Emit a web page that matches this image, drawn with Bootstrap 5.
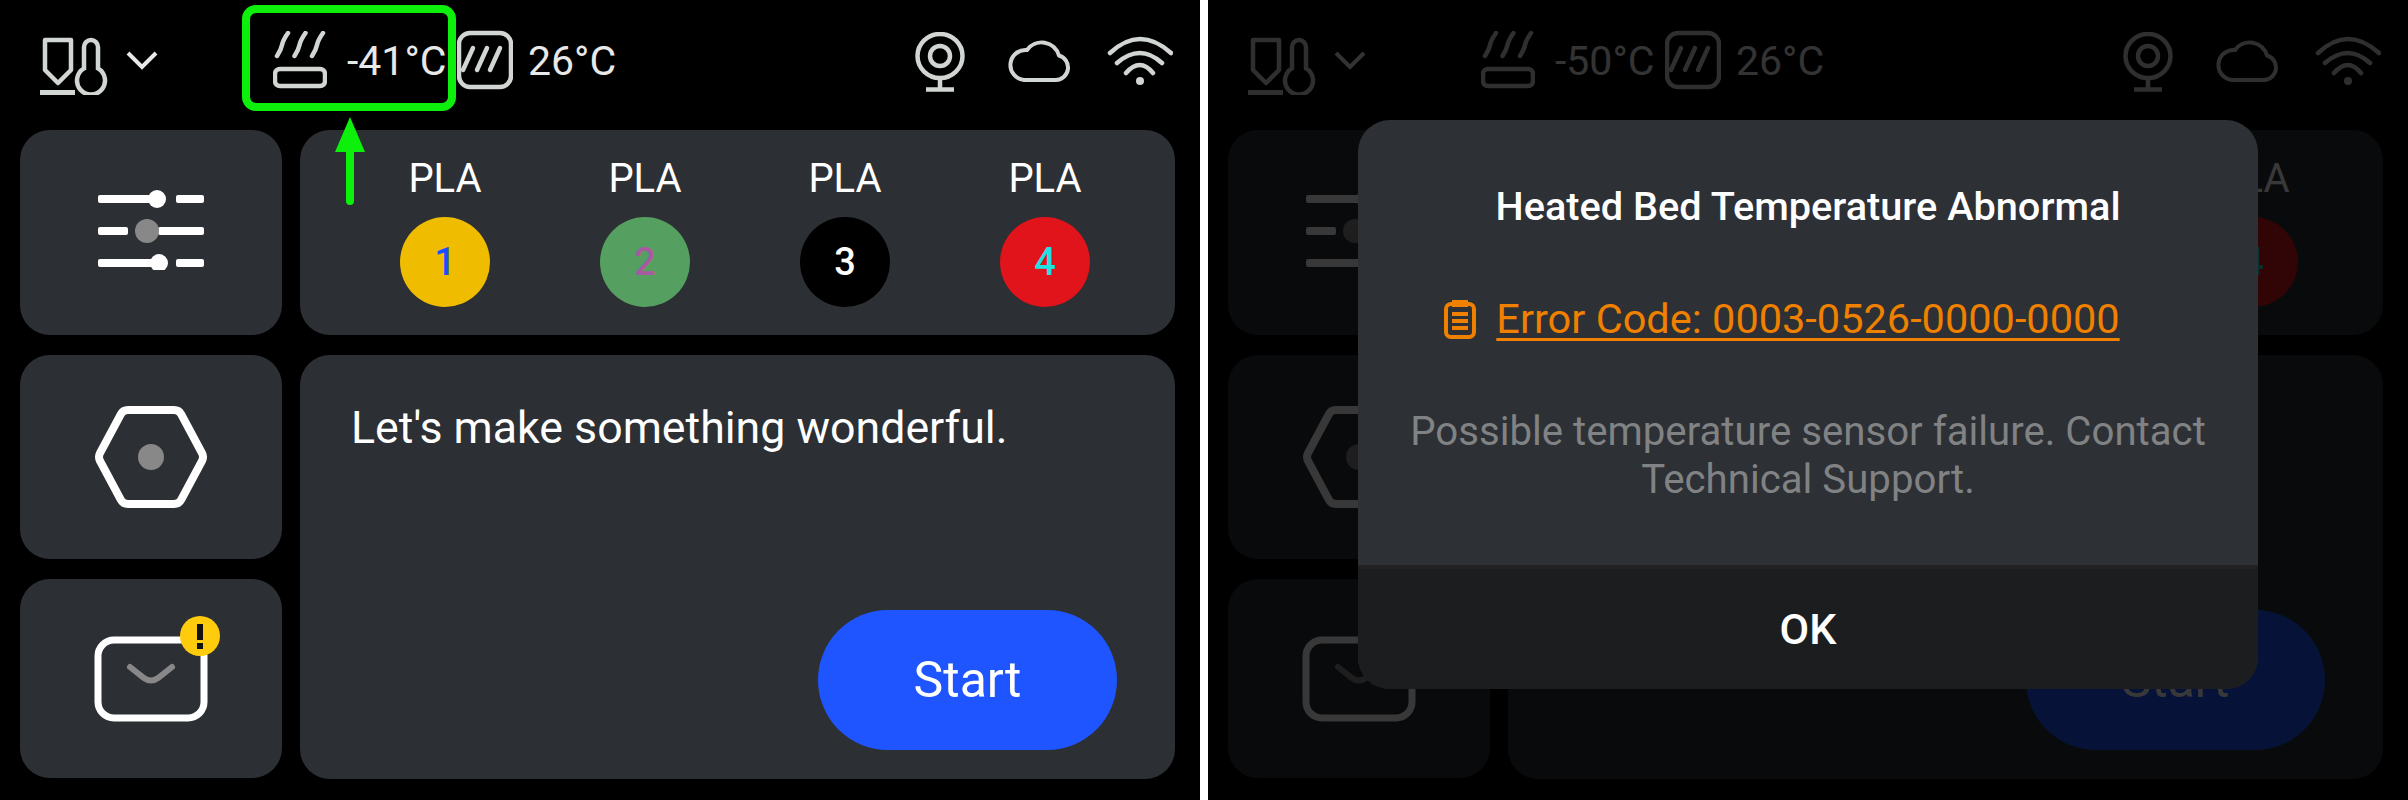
<!DOCTYPE html>
<html lang="en">

<head>
    <meta charset="UTF-8">
    <meta name="viewport" content="width=device-width, initial-scale=1">
    <title>Printer screen</title>
    <link href="https://cdn.jsdelivr.net/npm/bootstrap@5.3.0/dist/css/bootstrap.min.css" rel="stylesheet">
    <style>
        body {
            background: #fff;
            font-family: Roboto, "Liberation Sans", sans-serif;
            margin: 0;
        }

        .stage {
            width: 2408px;
            height: 800px;
            gap: 8px;
        }

        .screen {
            width: 1200px;
            height: 800px;
            background: #000;
            position: relative;
            overflow: hidden;
            color: #fff;
        }

        /* top bar */
        .topbar {
            height: 130px;
            padding: 0 27px 10px 40px;
            color: #d2d6d2;
        }

        .topbar svg {
            display: block;
            flex: none;
        }

        .temp {
            font-size: 41px;
            line-height: 1;
            color: #e8e8e8;
            margin-top: 2px;
        }

        .nozzle-icon { margin-top: 10px; }
        .chev { margin-left: 18px; margin-right: 115px; color: #e8e8e8; }
        .bed-temp { width: 110px; margin-left: 20px; }
        .room-temp { margin-left: 15px; }
        .cam-icon { margin-top: 4px; margin-right: 43px; }
        .cloud-icon { margin-right: 35px; }

        /* tiles */
        .tiles {
            padding-left: 20px;
            gap: 18px;
        }

        .side-col {
            width: 262px;
        }

        .main-col {
            width: 875px;
        }

        .tile {
            background: #2c2f33;
            border-radius: 30px;
        }

        .h-205 { height: 205px; }
        .h-204 { height: 204px; }
        .h-199 { height: 199px; }
        .h-424 { height: 424px; }
        .gap-20 { gap: 20px; }

        .sliders-icon { margin-bottom: 9px; }

        .msg-badge {
            position: absolute;
            right: -12px;
            top: -20px;
        }

        .spool {
            width: 200px;
        }

        .spool-row {
            padding-left: 45px;
            padding-top: 25px;
        }

        .spool-name {
            font-size: 40px;
            line-height: 47px;
            margin-bottom: 15px;
        }

        .spool-dot {
            width: 90px;
            height: 90px;
            border-radius: 50%;
            font-size: 38px;
            font-weight: 500;
        }

        .c-1 { background: #f0bc00; color: #1a4fff; }
        .c-2 { background: #55a060; color: #a85aa0; }
        .c-3 { background: #000; color: #fff; }
        .c-4 { background: #e0141a; color: #20e0e0; }

        .welcome {
            font-size: 44.7px;
            line-height: 52px;
            padding: 47px 0 0 51px;
        }

        .btn-start {
            width: 299px;
            height: 140px;
            border-radius: 70px;
            background: #1f55ff;
            color: #fff;
            font-size: 50px;
            border: 0;
            margin-right: 58px;
            margin-bottom: 29px;
        }

        /* annotation */
        .mark-box {
            position: absolute;
            left: 242px;
            top: 5px;
            width: 214px;
            height: 106px;
            border: 8px solid #0cf00c;
            border-radius: 14px;
        }

        .mark-arrow {
            position: absolute;
            left: 334px;
            top: 116px;
        }

        /* second screen */
        .dim {
            position: absolute;
            inset: 0;
            background: rgba(0, 0, 0, .78);
        }

        .dialog {
            position: absolute;
            left: 150px;
            top: 120px;
            width: 900px;
            height: 569px;
            border-radius: 32px;
            background: #2d3035;
            overflow: hidden;
        }

        .dialog-title {
            font-size: 39.7px;
            line-height: 48px;
            font-weight: 500;
            margin-top: 63px;
        }

        .dialog-code {
            margin-top: 64px;
            gap: 20px;
            color: #f08000;
            font-size: 41.5px;
            line-height: 48px;
        }

        /* icono colgado a la izquierda, el texto queda centrado */
        .dialog-code svg {
            margin-left: -52px;
            flex: none;
        }

        .dialog-code span {
            text-decoration: underline;
            text-underline-offset: 5px;
            text-decoration-thickness: 3px;
        }

        .dialog-text {
            margin-top: 65px;
            font-size: 40.2px;
            line-height: 48px;
            color: #808284;
        }

        .dialog-foot {
            height: 124px;
            background: #1c1d1f;
            border-top: 4px solid #222225;
            font-size: 43px;
            font-weight: 500;
        }
    </style>
</head>

<body>
    <div class="stage d-flex">

        <!-- pantalla con marca verde -->
        <div class="screen">
            <div class="topbar d-flex align-items-center">
                <svg class="nozzle-icon" width="68" height="60" viewBox="0 0 68 60" fill="none" stroke="currentColor" stroke-width="4.5"><path d="M5 5H31V35L18 48L5 35Z" stroke-linejoin="round"/><path d="M0 57.5H35" stroke-width="5"/><path d="M44 33.4V12a7 7 0 0 1 14 0V33.4A14 14 0 1 1 44 33.4Z"/></svg>
                <svg class="chev" width="32" height="20" viewBox="0 0 32 20" fill="none" stroke="currentColor" stroke-width="4"><path d="M2 3L16 17L30 3"/></svg>
                <svg width="54" height="58" viewBox="0 0 54 58" fill="none" stroke="currentColor" stroke-width="4.5" stroke-linecap="round"><path d="M4 25Q8 19 9 14T15 2M21.5 25Q25.5 19 26.5 14T32.5 2M39 25Q43 19 44 14T50 2"/><rect x="2" y="38" width="50" height="17" rx="5"/></svg>
                <div class="temp bed-temp">-41°C</div>
                <svg width="56" height="60" viewBox="0 0 56 60" fill="none" stroke="currentColor" stroke-width="4.5" stroke-linecap="round"><rect x="2" y="3" width="52" height="54" rx="11"/><path d="M6 40L16 18M20 40L30 18M33 40L43 18"/></svg>
                <div class="temp room-temp">26°C</div>
                <svg class="cam-icon ms-auto" width="50" height="60" viewBox="0 0 50 60" fill="none" stroke="currentColor" stroke-width="4.5"><ellipse cx="25" cy="24" rx="22.5" ry="22"/><circle cx="25" cy="24" r="10"/><path d="M25 46V57M11 57.5H39" /></svg>
                <svg class="cloud-icon" width="64" height="48" viewBox="0 0 64 48" fill="none" stroke="currentColor" stroke-width="4"><path d="M16 44H48A12.5 12.5 0 0 0 51 19.5A18 18 0 0 0 19 14A14.5 14.5 0 0 0 16 44Z" stroke-linejoin="round"/></svg>
                <svg width="66" height="50" viewBox="0 0 66 50" fill="none" stroke="currentColor" stroke-width="4.5" stroke-linecap="round"><path d="M3 18Q33 -10 64 18M10 28Q33 8 55 28M19 38Q33 22 46 38"/><circle cx="33" cy="46" r="4" fill="currentColor" stroke="none"/></svg>
            </div>
            <div class="tiles d-flex">
                <div class="side-col d-flex flex-column gap-20">
                    <div class="tile h-205 d-flex align-items-center justify-content-center">
                        <svg class="sliders-icon" width="106" height="84" viewBox="0 0 106 84"><g fill="#fff"><rect x="0" y="9" width="60" height="8" rx="2"/><circle cx="59" cy="13" r="9"/><rect x="78" y="9" width="28" height="8" rx="2"/><rect x="0" y="41" width="30" height="8" rx="2"/><rect x="60" y="41" width="46" height="8" rx="2"/><rect x="0" y="73" width="60" height="8" rx="2"/><circle cx="61" cy="77" r="9"/><rect x="78" y="73" width="28" height="8" rx="2"/></g><circle cx="49" cy="45" r="12" fill="#888"/></svg>
                    </div>
                    <div class="tile h-204 d-flex align-items-center justify-content-center">
                        <svg width="114" height="102" viewBox="0 0 114 102"><path d="M34 4H80Q85 4 87 8L108 47Q110 51 108 55L87 94Q85 98 80 98H34Q29 98 27 94L6 55Q4 51 6 47L27 8Q29 4 34 4Z" fill="none" stroke="#fff" stroke-width="8"/><circle cx="57" cy="51" r="13" fill="#888"/></svg>
                    </div>
                    <div class="tile h-199 d-flex align-items-center justify-content-center">
                        <div class="position-relative">
                            <svg class="d-block" width="114" height="86" viewBox="0 0 114 86" fill="none"><rect x="4" y="4" width="106" height="78" rx="16" stroke="#fff" stroke-width="7"/><path d="M36 31L50 42Q57 47 64 42L78 31" stroke="#888" stroke-width="6" stroke-linecap="round"/></svg>
                            <svg class="msg-badge" width="40" height="40" viewBox="0 0 40 40"><circle cx="20" cy="20" r="20" fill="#ffcb0d"/><path d="M17 8H23V24H17ZM17 27H23V33H17Z" fill="#111"/></svg>
                        </div>
                    </div>
                </div>
                <div class="main-col d-flex flex-column gap-20">
                    <div class="tile h-205 d-flex spool-row">
                        <div class="spool text-center"><div class="spool-name">PLA</div><div class="spool-dot d-flex align-items-center justify-content-center mx-auto c-1">1</div></div>
                        <div class="spool text-center"><div class="spool-name">PLA</div><div class="spool-dot d-flex align-items-center justify-content-center mx-auto c-2">2</div></div>
                        <div class="spool text-center"><div class="spool-name">PLA</div><div class="spool-dot d-flex align-items-center justify-content-center mx-auto c-3">3</div></div>
                        <div class="spool text-center"><div class="spool-name">PLA</div><div class="spool-dot d-flex align-items-center justify-content-center mx-auto c-4">4</div></div>
                    </div>
                    <div class="tile h-424 d-flex flex-column justify-content-between">
                        <div class="welcome">Let's make something wonderful.</div>
                        <button type="button" class="btn btn-start align-self-end">Start</button>
                    </div>
                </div>
            </div>
            <div class="mark-box"></div>
            <svg class="mark-arrow" width="32" height="90" viewBox="0 0 32 90"><path d="M16 1L31 36H20V85a4 4 0 0 1 -8 0V36H1Z" fill="#0cf00c"/></svg>
        </div>

        <!-- pantalla con error -->
        <div class="screen">
            <div class="topbar d-flex align-items-center">
                <svg class="nozzle-icon" width="68" height="60" viewBox="0 0 68 60" fill="none" stroke="currentColor" stroke-width="4.5"><path d="M5 5H31V35L18 48L5 35Z" stroke-linejoin="round"/><path d="M0 57.5H35" stroke-width="5"/><path d="M44 33.4V12a7 7 0 0 1 14 0V33.4A14 14 0 1 1 44 33.4Z"/></svg>
                <svg class="chev" width="32" height="20" viewBox="0 0 32 20" fill="none" stroke="currentColor" stroke-width="4"><path d="M2 3L16 17L30 3"/></svg>
                <svg width="54" height="58" viewBox="0 0 54 58" fill="none" stroke="currentColor" stroke-width="4.5" stroke-linecap="round"><path d="M4 25Q8 19 9 14T15 2M21.5 25Q25.5 19 26.5 14T32.5 2M39 25Q43 19 44 14T50 2"/><rect x="2" y="38" width="50" height="17" rx="5"/></svg>
                <div class="temp bed-temp">-50°C</div>
                <svg width="56" height="60" viewBox="0 0 56 60" fill="none" stroke="currentColor" stroke-width="4.5" stroke-linecap="round"><rect x="2" y="3" width="52" height="54" rx="11"/><path d="M6 40L16 18M20 40L30 18M33 40L43 18"/></svg>
                <div class="temp room-temp">26°C</div>
                <svg class="cam-icon ms-auto" width="50" height="60" viewBox="0 0 50 60" fill="none" stroke="currentColor" stroke-width="4.5"><ellipse cx="25" cy="24" rx="22.5" ry="22"/><circle cx="25" cy="24" r="10"/><path d="M25 46V57M11 57.5H39" /></svg>
                <svg class="cloud-icon" width="64" height="48" viewBox="0 0 64 48" fill="none" stroke="currentColor" stroke-width="4"><path d="M16 44H48A12.5 12.5 0 0 0 51 19.5A18 18 0 0 0 19 14A14.5 14.5 0 0 0 16 44Z" stroke-linejoin="round"/></svg>
                <svg width="66" height="50" viewBox="0 0 66 50" fill="none" stroke="currentColor" stroke-width="4.5" stroke-linecap="round"><path d="M3 18Q33 -10 64 18M10 28Q33 8 55 28M19 38Q33 22 46 38"/><circle cx="33" cy="46" r="4" fill="currentColor" stroke="none"/></svg>
            </div>
            <div class="tiles d-flex">
                <div class="side-col d-flex flex-column gap-20">
                    <div class="tile h-205 d-flex align-items-center justify-content-center">
                        <svg class="sliders-icon" width="106" height="84" viewBox="0 0 106 84"><g fill="#fff"><rect x="0" y="9" width="60" height="8" rx="2"/><circle cx="59" cy="13" r="9"/><rect x="78" y="9" width="28" height="8" rx="2"/><rect x="0" y="41" width="30" height="8" rx="2"/><rect x="60" y="41" width="46" height="8" rx="2"/><rect x="0" y="73" width="60" height="8" rx="2"/><circle cx="61" cy="77" r="9"/><rect x="78" y="73" width="28" height="8" rx="2"/></g><circle cx="49" cy="45" r="12" fill="#888"/></svg>
                    </div>
                    <div class="tile h-204 d-flex align-items-center justify-content-center">
                        <svg width="114" height="102" viewBox="0 0 114 102"><path d="M34 4H80Q85 4 87 8L108 47Q110 51 108 55L87 94Q85 98 80 98H34Q29 98 27 94L6 55Q4 51 6 47L27 8Q29 4 34 4Z" fill="none" stroke="#fff" stroke-width="8"/><circle cx="57" cy="51" r="13" fill="#888"/></svg>
                    </div>
                    <div class="tile h-199 d-flex align-items-center justify-content-center">
                        <svg class="d-block" width="114" height="86" viewBox="0 0 114 86" fill="none"><rect x="4" y="4" width="106" height="78" rx="16" stroke="#fff" stroke-width="7"/><path d="M36 31L50 42Q57 47 64 42L78 31" stroke="#888" stroke-width="6" stroke-linecap="round"/></svg>
                    </div>
                </div>
                <div class="main-col d-flex flex-column gap-20">
                    <div class="tile h-205 d-flex spool-row">
                        <div class="spool text-center"><div class="spool-name">PLA</div><div class="spool-dot d-flex align-items-center justify-content-center mx-auto c-1">1</div></div>
                        <div class="spool text-center"><div class="spool-name">PLA</div><div class="spool-dot d-flex align-items-center justify-content-center mx-auto c-2">2</div></div>
                        <div class="spool text-center"><div class="spool-name">PLA</div><div class="spool-dot d-flex align-items-center justify-content-center mx-auto c-3">3</div></div>
                        <div class="spool text-center"><div class="spool-name">PLA</div><div class="spool-dot d-flex align-items-center justify-content-center mx-auto c-4">4</div></div>
                    </div>
                    <div class="tile h-424 d-flex flex-column justify-content-between">
                        <div class="welcome">Let's make something wonderful.</div>
                        <button type="button" class="btn btn-start align-self-end">Start</button>
                    </div>
                </div>
            </div>
            <div class="dim"></div>
            <div class="dialog d-flex flex-column text-center">
                <div class="flex-grow-1 px-4">
                    <div class="dialog-title">Heated Bed Temperature Abnormal</div>
                    <div class="dialog-code d-flex align-items-center justify-content-center">
                        <svg width="32" height="40" viewBox="0 0 32 40" fill="none" stroke="#f08000" stroke-width="4"><rect x="2" y="5" width="28" height="33" rx="5"/><path d="M9 2H23V7H9Z" fill="#f08000" stroke-width="2"/><path d="M8 15H24M8 22H24M8 29H24" stroke-width="4"/></svg>
                        <span>Error Code: 0003-0526-0000-0000</span>
                    </div>
                    <div class="dialog-text">Possible temperature sensor failure. Contact<br>Technical Support.</div>
                </div>
                <div class="dialog-foot d-flex align-items-center justify-content-center">OK</div>
            </div>
        </div>

    </div>
    <script src="https://cdn.jsdelivr.net/npm/bootstrap@5.3.0/dist/js/bootstrap.bundle.min.js"></script>
</body>

</html>
